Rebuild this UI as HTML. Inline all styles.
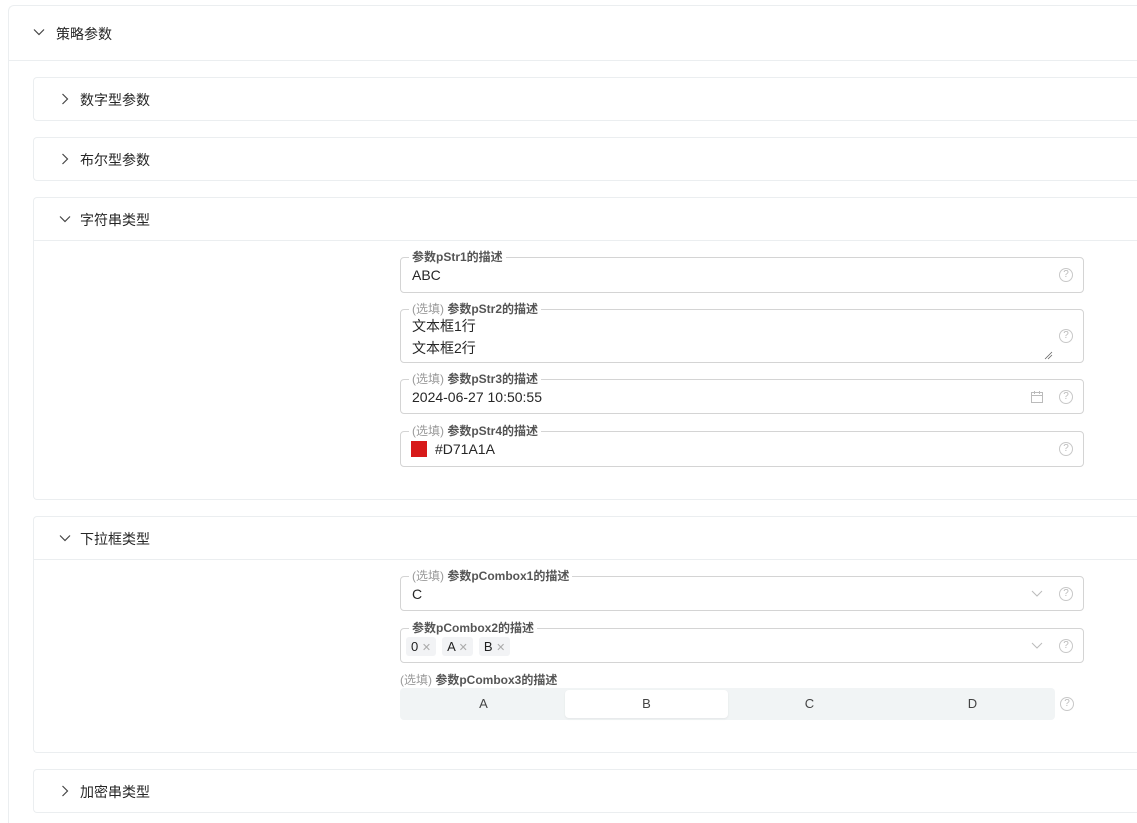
<!DOCTYPE html>
<html style="height:823px;overflow:hidden"><head><meta charset="utf-8"><style>
*{box-sizing:border-box;margin:0;padding:0}
body{width:1137px;height:823px;background:#fff;font-family:"Liberation Sans","Noto Sans CJK SC",sans-serif;color:#1f1f1f;position:relative;overflow:hidden}
.abs{position:absolute}
.card{position:absolute;border:1px solid #ebeef0;border-right:none;border-radius:4px 0 0 4px;background:#fff}
.hd{position:absolute;font-size:14px;color:#262626}
.line{position:absolute;height:1px;background:#ebeef0}
.field{position:absolute;left:400px;width:684px;border:1px solid #d4d4d4;border-radius:4px}
.lbl{position:absolute;left:8px;top:-9px;background:#fff;padding:0 3px;font-size:12px;font-weight:bold;color:#555;line-height:16px;white-space:nowrap}
.lbl i{font-style:normal;font-weight:normal;color:#999}
.val{position:absolute;left:11px;font-size:14px;color:#262626}
.q{position:absolute;width:14px;height:14px;border:1px solid #c8c8c8;border-radius:50%;font-size:10px;color:#bbb;text-align:center;line-height:12px}
.tag{display:inline-block;background:#f2f3f5;border-radius:3px;padding:0 5px;height:19px;line-height:19px;font-size:13px;margin-right:6px}
.tag span{color:#aaa;font-size:11px}
.seg{position:absolute;font-size:13px;color:#444;text-align:center;line-height:28px;height:28px}
</style></head><body>
<div class="card" style="left:8px;top:5px;width:1129px;height:818px;border-bottom:none;border-radius:6px 0 0 0"></div>
<div class="line" style="left:9px;top:60px;width:1128px"></div>
<svg class="abs" style="left:33px;top:26px" width="12" height="12"><path d="M1 3.5 L6 8.5 L11 3.5" stroke="#444" fill="none" stroke-width="1.2"/></svg>
<div class="hd" style="left:56px;top:24px">策略参数</div>

<div class="card" style="left:33px;top:77px;width:1104px;height:44px"></div>
<svg class="abs" style="left:59px;top:93px" width="12" height="12"><path d="M3.5 1 L8.5 6 L3.5 11" stroke="#444" fill="none" stroke-width="1.2"/></svg>
<div class="hd" style="left:80px;top:90px">数字型参数</div>

<div class="card" style="left:33px;top:137px;width:1104px;height:44px"></div>
<svg class="abs" style="left:59px;top:153px" width="12" height="12"><path d="M3.5 1 L8.5 6 L3.5 11" stroke="#444" fill="none" stroke-width="1.2"/></svg>
<div class="hd" style="left:80px;top:150px">布尔型参数</div>

<div class="card" style="left:33px;top:197px;width:1104px;height:303px"></div>
<div class="line" style="left:34px;top:240px;width:1103px"></div>
<svg class="abs" style="left:59px;top:213px" width="12" height="12"><path d="M1 3.5 L6 8.5 L11 3.5" stroke="#444" fill="none" stroke-width="1.2"/></svg>
<div class="hd" style="left:80px;top:210px">字符串类型</div>

<div class="field" style="top:257px;height:36px"><div class="lbl">参数pStr1的描述</div><div class="val" style="top:9px">ABC</div><div class="q" style="left:658px;top:10px">?</div></div>
<div class="field" style="top:309px;height:54px"><div class="lbl"><i>(选填)</i> 参数pStr2的描述</div><div class="val" style="top:5px;line-height:22px">文本框1行<br>文本框2行</div><div class="q" style="left:658px;top:19px">?</div>
<svg class="abs" style="left:643px;top:41px" width="9" height="9"><path d="M1 8 L8 1 M4 8 L8 4" stroke="#666" stroke-width="0.8"/></svg></div>
<div class="field" style="top:379px;height:35px"><div class="lbl"><i>(选填)</i> 参数pStr3的描述</div><div class="val" style="top:9px">2024-06-27 10:50:55</div>
<svg class="abs" style="left:629px;top:10px" width="14" height="14"><rect x="1.5" y="2.5" width="11" height="10" fill="none" stroke="#bbb"/><path d="M1.5 5.5 H12.5 M4.5 1 V4 M9.5 1 V4" stroke="#bbb"/></svg>
<div class="q" style="left:658px;top:10px">?</div></div>
<div class="field" style="top:431px;height:36px"><div class="lbl"><i>(选填)</i> 参数pStr4的描述</div><div class="abs" style="left:10px;top:9px;width:16px;height:16px;background:#D71A1A"></div><div class="val" style="left:34px;top:9px">#D71A1A</div><div class="q" style="left:658px;top:10px">?</div></div>

<div class="card" style="left:33px;top:516px;width:1104px;height:237px"></div>
<div class="line" style="left:34px;top:559px;width:1103px"></div>
<svg class="abs" style="left:59px;top:532px" width="12" height="12"><path d="M1 3.5 L6 8.5 L11 3.5" stroke="#444" fill="none" stroke-width="1.2"/></svg>
<div class="hd" style="left:80px;top:529px">下拉框类型</div>

<div class="field" style="top:576px;height:35px"><div class="lbl"><i>(选填)</i> 参数pCombox1的描述</div><div class="val" style="top:9px">C</div>
<svg class="abs" style="left:630px;top:12px" width="12" height="10"><path d="M1 2 L6 7 L11 2" stroke="#bbb" fill="none"/></svg><div class="q" style="left:658px;top:10px">?</div></div>
<div class="field" style="top:628px;height:35px"><div class="lbl">参数pCombox2的描述</div><div class="abs" style="left:5px;top:8px;white-space:nowrap"><span class="tag">0 <span>✕</span></span><span class="tag">A <span>✕</span></span><span class="tag">B <span>✕</span></span></div>
<svg class="abs" style="left:630px;top:12px" width="12" height="10"><path d="M1 2 L6 7 L11 2" stroke="#bbb" fill="none"/></svg><div class="q" style="left:658px;top:10px">?</div></div>
<div class="abs" style="left:400px;top:671px;font-size:12px;font-weight:bold;color:#555"><span style="font-weight:normal;color:#999">(选填)</span> 参数pCombox3的描述</div>
<div class="abs" style="left:400px;top:688px;width:655px;height:32px;background:#f1f4f5;border-radius:4px"></div>
<div class="abs" style="left:565px;top:690px;width:163px;height:28px;background:#fff;border-radius:4px;box-shadow:0 1px 2px rgba(0,0,0,.06)"></div>
<div class="seg" style="left:402px;top:690px;width:163px">A</div>
<div class="seg" style="left:565px;top:690px;width:163px">B</div>
<div class="seg" style="left:728px;top:690px;width:163px">C</div>
<div class="seg" style="left:891px;top:690px;width:163px">D</div>
<div class="q" style="left:1060px;top:697px">?</div>

<div class="card" style="left:33px;top:769px;width:1104px;height:44px"></div>
<svg class="abs" style="left:59px;top:785px" width="12" height="12"><path d="M3.5 1 L8.5 6 L3.5 11" stroke="#444" fill="none" stroke-width="1.2"/></svg>
<div class="hd" style="left:80px;top:782px">加密串类型</div>
</body></html>
